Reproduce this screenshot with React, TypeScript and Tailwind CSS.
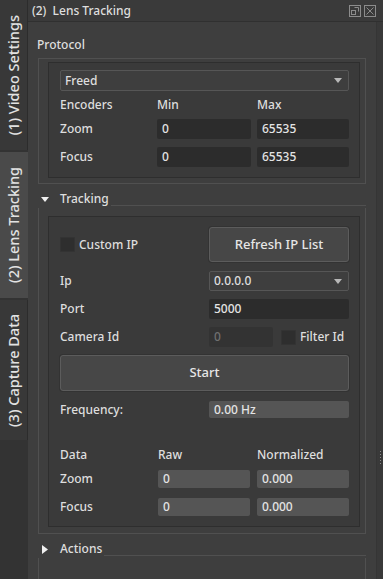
import React from "react";

const text = "text-[#dedede]";

function Tab({ label, active, h }: { label: string; active?: boolean; h: string }) {
  return (
    <div
      className={`${h} flex items-center justify-center border-r ${
        active ? "bg-[#4a4a4a] border-[#4a4a4a]" : "bg-[#383838] border-[#2c2c2c]"
      }`}
    >
      <span className="[writing-mode:vertical-rl] rotate-180 whitespace-nowrap text-[14.5px] font-medium text-[#e2e2e2]">
        {label}
      </span>
    </div>
  );
}

function Arrow() {
  return (
    <svg width="8" height="5" viewBox="0 0 8 5" className="shrink-0">
      <path d="M0 0H8L4 5Z" fill="#b8b8b8" />
    </svg>
  );
}

function Combo({ value }: { value: string }) {
  return (
    <div className="flex h-full items-center justify-between rounded-[2px] border border-[#565656] bg-[#3e3e3e] pl-[4px] pr-[6px]">
      <span>{value}</span>
      <Arrow />
    </div>
  );
}

function Field({ value, tone = "dark" }: { value: string; tone?: "dark" | "ro" | "off" }) {
  const cls =
    tone === "ro"
      ? "bg-[#555555] text-[#e4e4e4]"
      : tone === "off"
        ? "bg-[#333333] text-[#707070]"
        : "bg-[#2c2c2c] text-[#e4e4e4]";
  return <div className={`flex h-full items-center rounded-[2px] pl-[5px] ${cls}`}>{value}</div>;
}

function Check() {
  return <div className="h-[15px] w-[15px] shrink-0 rounded-[1px] border border-[#333] bg-[#2e2e2e]" />;
}

function Button({ label }: { label: string }) {
  return (
    <div className="flex h-full items-center justify-center rounded-[3px] border border-[#5c5c5c] bg-[#474747] text-[13px] font-medium text-[#e6e6e6] shadow-[0_0_0_1px_#333]">
      {label}
    </div>
  );
}

function SectionHeader({ title, open }: { title: string; open: boolean }) {
  return (
    <div className="flex h-[18px] items-center">
      <div className="ml-[3px] flex w-[8px] justify-center">
        {open ? (
          <svg width="8" height="5" viewBox="0 0 8 5">
            <path d="M0 0H8L4 5Z" fill="#f0f0f0" />
          </svg>
        ) : (
          <svg width="6" height="9" viewBox="0 0 6 9">
            <path d="M0 0L6 4.5L0 9Z" fill="#f0f0f0" />
          </svg>
        )}
      </div>
      <span className="ml-[11px]">{title}</span>
      <div className="ml-[2px] mt-[12px] flex-1 border-t border-[#505050]" />
    </div>
  );
}

export default function App() {
  return (
    <div
      className={`flex h-[579px] w-[383px] overflow-hidden bg-[#333333] text-[12px] font-medium ${text}`}
      style={{ fontFamily: '"Noto Sans", "Open Sans", sans-serif' }}
    >
      {/* dock tabs */}
      <div className="flex w-[28px] shrink-0 flex-col gap-[2px]">
        <Tab label="(1) Video Settings" h="h-[150px]" />
        <Tab label="(2) Lens Tracking" h="h-[146px]" active />
        <Tab label="(3) Capture Data" h="h-[140px]" />
      </div>

      <div className="flex flex-1 flex-col bg-[#3e3e3e]">
        {/* title bar */}
        <div className="flex h-[22px] shrink-0 items-center border-b border-[#303030] bg-[#3a3a3a] pl-[4px]">
          <span className="pt-[1px]">(2)&nbsp; Lens Tracking</span>
          <div className="ml-auto mr-[7px] flex gap-[3px]">
            <svg width="12" height="12" viewBox="0 0 12 12" fill="none" stroke="#8c8c8c">
              <rect x="0.5" y="0.5" width="11" height="11" />
              <rect x="2.5" y="5.5" width="4" height="4" />
              <path d="M5.5 2.5H9.5V6.5" />
            </svg>
            <svg width="12" height="12" viewBox="0 0 12 12" fill="none" stroke="#8c8c8c">
              <rect x="0.5" y="0.5" width="11" height="11" />
              <path d="M2.5 2.5L9.5 9.5M9.5 2.5L2.5 9.5" />
            </svg>
          </div>
        </div>

        <div className="flex flex-1">
          <div className="flex-1 px-[10px]">
            {/* Protocol */}
            <div className="ml-[-1px] mt-[14px] h-[18px] leading-[18px]">Protocol</div>
            <div className="mt-[4px] border border-[#505050] pb-[5px] pl-[9px] pr-[5px] pt-[3px]">
              <div className="border border-[#2e2e2e] bg-[#3a3a3a] pb-[10px] pl-[11px] pr-[10px] pt-[7px]">
                <div className="h-[21px]">
                  <Combo value="Freed" />
                </div>
                <div className="grid grid-cols-[91px_94px_92px] gap-x-[6px]">
                  <div className="mt-[5px] flex h-[18px] items-center">Encoders</div>
                  <div className="mt-[5px] flex h-[18px] items-center">Min</div>
                  <div className="mt-[5px] flex h-[18px] items-center">Max</div>
                  <div className="mt-[5px] flex h-[20px] items-center">Zoom</div>
                  <div className="mt-[5px] h-[20px]"><Field value="0" /></div>
                  <div className="mt-[5px] h-[20px]"><Field value="65535" /></div>
                  <div className="mt-[8px] flex h-[20px] items-center">Focus</div>
                  <div className="mt-[8px] h-[20px]"><Field value="0" /></div>
                  <div className="mt-[8px] h-[20px]"><Field value="65535" /></div>
                </div>
              </div>
            </div>

            {/* Tracking */}
            <div className="mt-[6px]">
              <SectionHeader title="Tracking" open />
            </div>
            <div className="border-x border-b border-[#505050] pb-[6px] pl-[9px] pr-[5px] pt-[8px]">
              <div className="border border-[#2e2e2e] bg-[#3a3a3a] pb-[10px] pl-[11px] pr-[10px] pt-[10px]">
                <div className="flex h-[35px] items-center">
                  <div className="flex w-[149px] items-center gap-[4px]">
                    <Check />
                    <span>Custom IP</span>
                  </div>
                  <div className="h-full w-[140px]">
                    <Button label="Refresh IP List" />
                  </div>
                </div>
                <div className="mt-[9px] flex h-[20px] items-center">
                  <div className="w-[149px]">Ip</div>
                  <div className="h-full w-[140px]"><Combo value="0.0.0.0" /></div>
                </div>
                <div className="mt-[8px] flex h-[20px] items-center">
                  <div className="w-[149px]">Port</div>
                  <div className="h-full w-[140px]"><Field value="5000" /></div>
                </div>
                <div className="mt-[8px] flex h-[20px] items-center">
                  <div className="w-[149px]">Camera Id</div>
                  <div className="h-full w-[64px]"><Field value="0" tone="off" /></div>
                  <div className="ml-[8px]"><Check /></div>
                  <span className="ml-[4px]">Filter Id</span>
                </div>
                <div className="mt-[8px] h-[36px]">
                  <Button label="Start" />
                </div>
                <div className="mt-[10px] flex h-[17px] items-center">
                  <div className="w-[149px]">Frequency:</div>
                  <div className="h-full w-[140px]"><Field value="0.00 Hz" tone="ro" /></div>
                </div>
                <div className="grid grid-cols-[91px_92px_92px] gap-x-[7px]">
                  <div className="mt-[28px] flex h-[18px] items-center">Data</div>
                  <div className="mt-[28px] flex h-[18px] items-center">Raw</div>
                  <div className="mt-[28px] flex h-[18px] items-center">Normalized</div>
                  <div className="mt-[6px] flex h-[18px] items-center">Zoom</div>
                  <div className="mt-[6px] h-[18px]"><Field value="0" tone="ro" /></div>
                  <div className="mt-[6px] h-[18px]"><Field value="0.000" tone="ro" /></div>
                  <div className="mt-[10px] flex h-[18px] items-center">Focus</div>
                  <div className="mt-[10px] h-[18px]"><Field value="0" tone="ro" /></div>
                  <div className="mt-[10px] h-[18px]"><Field value="0.000" tone="ro" /></div>
                </div>
              </div>
            </div>

            {/* Actions */}
            <div className="mt-[6px]">
              <SectionHeader title="Actions" open={false} />
            </div>
            <div className="h-[40px] border-x border-[#505050]" />
          </div>

          {/* splitter */}
          <div className="flex w-[7px] shrink-0 flex-col items-end border-l border-[#353535] bg-[#393939] pr-[2px]">
            <div className="mt-[429px] flex flex-col gap-[2px]">
              {[0, 1, 2, 3, 4].map((i) => (
                <div key={i} className="h-[1px] w-[1px] bg-[#8a8a8a]" />
              ))}
            </div>
          </div>
        </div>
      </div>
    </div>
  );
}
